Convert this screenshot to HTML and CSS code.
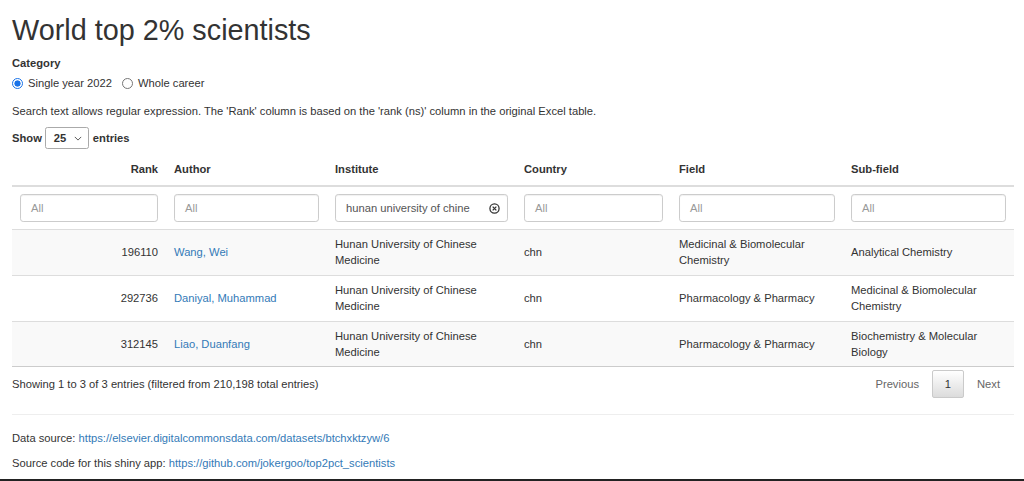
FILE: index.html
```html
<!DOCTYPE html>
<html lang="en">
<head>
<meta charset="utf-8">
<title>World top 2% scientists</title>
<link rel="stylesheet" href="styles.css">
</head>
<body>
<div class="page">
  <h2 class="title">World top 2% scientists</h2>

  <div class="category">
    <div class="cat-label">Category</div>
    <div class="radios">
      <label class="radio"><span class="dot checked"></span>Single year 2022</label>
      <label class="radio"><span class="dot"></span>Whole career</label>
    </div>
  </div>

  <p class="note">Search text allows regular expression. The 'Rank' column is based on the 'rank (ns)' column in the original Excel table.</p>

  <div class="length">
    <span class="bold">Show</span>
    <span class="select">25
      <svg class="chev" viewBox="0 0 10 6" width="8" height="5"><path d="M1 1l4 4 4-4" fill="none" stroke="#555" stroke-width="1.2"/></svg>
    </span>
    <span class="bold">entries</span>
  </div>

  <table class="grid">
    <colgroup>
      <col class="c-rank"><col class="c-author"><col class="c-inst"><col class="c-country"><col class="c-field"><col class="c-sub">
    </colgroup>
    <thead>
      <tr class="head">
        <th class="right">Rank</th>
        <th>Author</th>
        <th>Institute</th>
        <th>Country</th>
        <th>Field</th>
        <th>Sub-field</th>
      </tr>
      <tr class="filters">
        <td><div class="inp ph">All</div></td>
        <td><div class="inp ph">All</div></td>
        <td><div class="inp val">hunan university of chine
          <svg class="clear" viewBox="0 0 12 12" width="11" height="11"><circle cx="6" cy="6" r="5" fill="none" stroke="#333" stroke-width="1.4"/><path d="M4 4l4 4M8 4l-4 4" stroke="#333" stroke-width="1.4"/></svg>
        </div></td>
        <td><div class="inp ph">All</div></td>
        <td><div class="inp ph">All</div></td>
        <td><div class="inp ph">All</div></td>
      </tr>
    </thead>
    <tbody>
      <tr class="odd">
        <td class="right">196110</td>
        <td><a href="#">Wang, Wei</a></td>
        <td>Hunan University of Chinese Medicine</td>
        <td>chn</td>
        <td>Medicinal &amp; Biomolecular Chemistry</td>
        <td>Analytical Chemistry</td>
      </tr>
      <tr>
        <td class="right">292736</td>
        <td><a href="#">Daniyal, Muhammad</a></td>
        <td>Hunan University of Chinese Medicine</td>
        <td>chn</td>
        <td>Pharmacology &amp; Pharmacy</td>
        <td>Medicinal &amp; Biomolecular Chemistry</td>
      </tr>
      <tr class="odd">
        <td class="right">312145</td>
        <td><a href="#">Liao, Duanfang</a></td>
        <td>Hunan University of Chinese Medicine</td>
        <td>chn</td>
        <td>Pharmacology &amp; Pharmacy</td>
        <td>Biochemistry &amp; Molecular Biology</td>
      </tr>
    </tbody>
  </table>

  <div class="tfoot">
    <div class="info">Showing 1 to 3 of 3 entries (filtered from 210,198 total entries)</div>
    <div class="pager">
      <span class="pbtn disabled">Previous</span>
      <span class="pbtn current">1</span>
      <span class="pbtn disabled">Next</span>
    </div>
  </div>

  <hr class="rule">

  <p class="src">Data source: <a href="#">https://elsevier.digitalcommonsdata.com/datasets/btchxktzyw/6</a></p>
  <p class="src">Source code for this shiny app: <a href="#">https://github.com/jokergoo/top2pct_scientists</a></p>
</div>
<div class="bottomline"></div>
</body>
</html>
```
FILE: styles.css
```css
* { box-sizing: border-box; }
html, body { margin: 0; padding: 0; background: #fff; }
body {
  font-family: "Liberation Sans", Arial, Helvetica, sans-serif;
  font-size: 11.2px;
  line-height: 16px;
  color: #333;
  height: 481px;
  overflow: hidden;
  display: flex;
  flex-direction: column;
}
.page { padding: 0 10px 0 12px; flex: 1; min-height: 0; }
a { color: #337ab7; text-decoration: none; }

.title {
  font-size: 28.8px;
  font-weight: 400;
  line-height: 32px;
  margin: 14px 0 9px 0;
}

.cat-label { font-weight: 700; line-height: 16px; }
.radios { display: flex; gap: 10px; margin-top: 4px; }
.radio { display: flex; align-items: center; gap: 5px; line-height: 16px; }
.dot {
  width: 11px; height: 11px; border-radius: 50%;
  border: 1px solid #767676; background: #fff; display: inline-block;
}
.dot.checked {
  border: 1px solid #1a73e8;
  background: radial-gradient(circle, #1a73e8 0 2.8px, #fff 3.4px);
}

.note { margin: 12px 0 8px 0; }

.length { display: flex; align-items: center; gap: 4px; height: 22px; }
.bold { font-weight: 700; }
.select {
  display: inline-flex; align-items: center; justify-content: space-between;
  width: 44px; height: 22px; border: 1px solid #aaa; border-radius: 2.4px;
  padding: 0 6px 0 8px; font-weight: 700; background: #fff;
  margin-left: -1px;
}
.chev { margin-top: 1px; }

.grid {
  width: 1002px;
  border-collapse: collapse;
  table-layout: fixed;
  margin-top: 8px;
}
.c-rank { width: 154px; }
.c-author { width: 161px; }
.c-inst { width: 189px; }
.c-country { width: 155px; }
.c-field { width: 172px; }
.c-sub { width: 171px; }

.grid th {
  text-align: left; font-weight: 700;
  padding: 4px 8px 8px 8px;
  line-height: 16px;
  border-bottom: 2px solid #ddd;
}
.grid .right { text-align: right; }
.filters td { padding: 7px 8px 7px 8px; border-bottom: 1px solid #ddd; }
.inp {
  height: 28px; border: 1px solid #ccc; border-radius: 3.2px;
  padding: 0 10px; display: flex; align-items: center; justify-content: space-between;
  box-shadow: inset 0 1px 1px rgba(0,0,0,.06);
}
.inp.ph { color: #999; }
.inp.val { color: #555; padding-right: 7px; }
.clear { flex: none; }

.grid tbody td {
  padding: 6.4px 8px;
  line-height: 16px;
  height: 45px;
  border-bottom: 1px solid #ddd;
  vertical-align: middle;
}
.grid tbody tr:last-child td { border-bottom: 1px solid #ccc; }
.grid tbody tr.odd td { background: #f9f9f9; }

.tfoot {
  width: 1002px;
  display: flex; justify-content: space-between; align-items: flex-start;
  padding-top: 4px;
}
.info { padding-top: 5px; }
.pager { display: flex; align-items: center; gap: 0; padding-right: 4px; margin-top: -1px; }
.pbtn { padding: 5px 10px; line-height: 16px; color: #666; }
.pbtn.current {
  min-width: 32px; text-align: center; color: #333;
  border: 1px solid #cacaca; border-radius: 2px;
  background: linear-gradient(#fff, #dcdcdc);
  padding: 5px 8px;
  margin: 0 3px;
}
.pbtn.disabled { color: #666; }

.rule { border: 0; border-top: 1px solid #eee; margin: 16px 0 15px 0; width: 1002px; }
.src { margin: 0 0 9px 0; }
.src:last-child { margin-bottom: 0; }

.bottomline { height: 2px; background: #222; flex: none; }
```
